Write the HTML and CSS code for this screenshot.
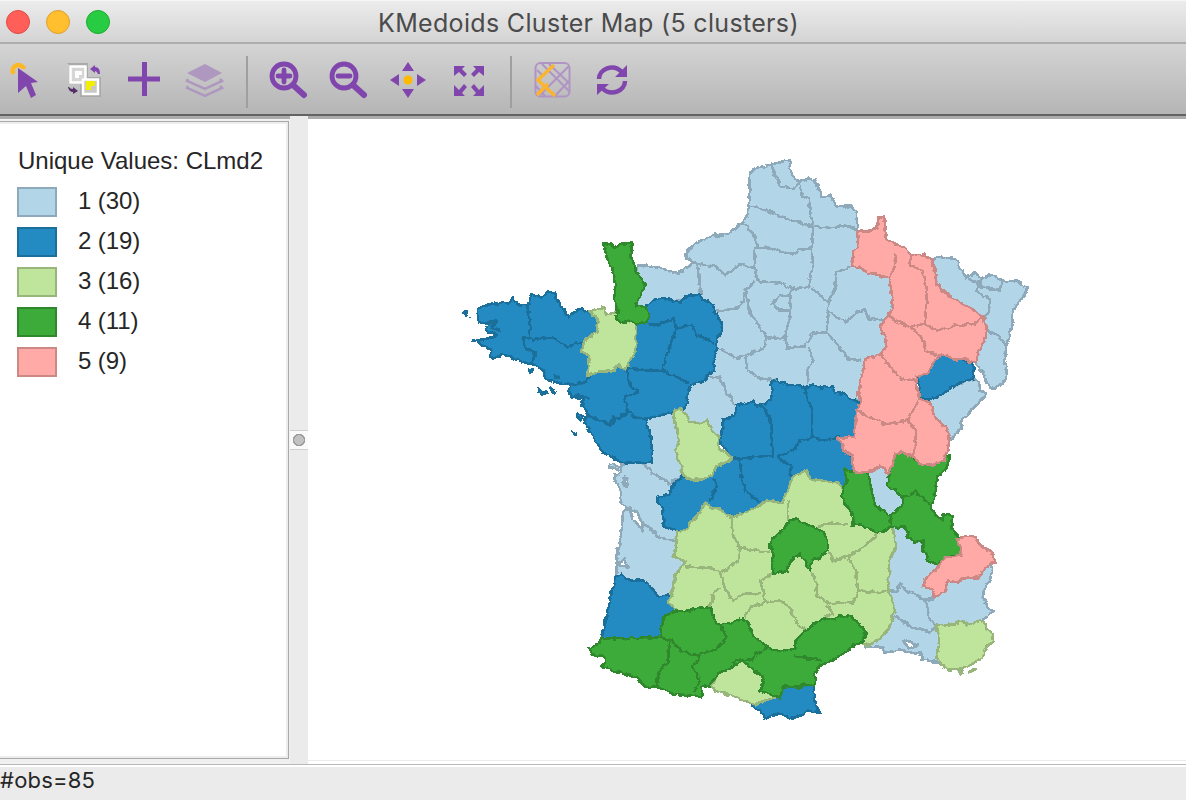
FILE: index.html
```html
<!DOCTYPE html>
<html lang="en">
<head>
<meta charset="utf-8">
<title>KMedoids Cluster Map</title>
<link rel="stylesheet" href="styles.css">
</head>
<body>
<div class="window">
  <header class="titlebar">
    <div class="lights"><span class="light close"></span><span class="light minimize"></span><span class="light maximize"></span></div>
    <h1 class="title">KMedoids Cluster Map (5 clusters)</h1>
  </header>
  <nav class="toolbar">
    <svg class="icon" viewBox="4 60 40 40"><path d="M13.500 74c-3-6 3-11 8-8q2 1 2.500 3" fill="none" stroke="#fdb924" stroke-width="4.500"/><path class="solid" d="M18 68l20 14-7 1 5 12-5 3-5-12-8 7z"/></svg>
    <svg class="icon" viewBox="64 60 40 40"><path d="M67 63h21v14h13v20H80V84H69V65z" fill="#aaa"/><rect x="70.500" y="66.500" width="15" height="16" fill="#d6d6d6" stroke="#fff" stroke-width="2.500"/><path d="M75 71h7v4h-3v3h-4z" fill="#fff"/><rect x="83" y="79.500" width="15" height="14.500" fill="#c9c9c9" stroke="#fff" stroke-width="2.500"/><path d="M86 81h9v5h-4v4h-5z" fill="#f4ee00"/><path class="solid" d="M90 69l5-4v2q5 0 5 7h-2q-1-3-3-3v2z"/><path d="M78 91l-5-4v2q-3 0-4-2h-1q1 5 5 5v2z" fill="#553068"/></svg>
    <svg class="icon" viewBox="124 60 40 40"><path d="M144.500 62v34M128 79h32" stroke="#8146ad" stroke-width="5" fill="none"/></svg>
    <svg class="icon" viewBox="184 60 40 40"><path d="M187 73l18-9 17 9-17 9z" fill="#af98bf"/><path d="M188 79l-1 2 18 8 17-8-2-2M188 86l-1 2 18 8 17-8-2-2" fill="none" stroke="#af98bf" stroke-width="2.500"/></svg>
    <span class="divider"></span>
    <svg class="icon" viewBox="268 60 40 40"><g class="line"><circle cx="284" cy="76" r="12"/><path d="M284 70v12M278 76h12"/><path d="M293 85l11 10" stroke-width="6"/></g></svg>
    <svg class="icon" viewBox="328 60 40 40"><g class="line"><circle cx="344" cy="76" r="12"/><path d="M338 76h12"/><path d="M353 85l11 10" stroke-width="6"/></g></svg>
    <svg class="icon" viewBox="388 60 40 40"><circle cx="408" cy="80" r="4.500" fill="#fdb900"/><path class="solid" d="M408 62l6 9h-12zM408 98l6-9h-12zM390 80l9-6v12zM426 80l-9-6v12z"/></svg>
    <svg class="icon" viewBox="448 60 40 40"><path class="solid" d="M454 66h11l-3 3 5 5-3 3-5-5-5 4zM484 66h-11l3 3-5 5 3 3 5-5 5 4zM454 96h11l-3-3 5-6-3-3-5 6-5-5zM484 96h-11l3-3-5-6 3-3 5 6 5-5z"/></svg>
    <span class="divider"></span>
    <svg class="icon" viewBox="532 60 40 40"><g fill="none"><rect x="535.500" y="63" width="34" height="33.500" rx="5" stroke="#af94c4" stroke-width="2"/><path d="M542 64l28 28M569 66l-29 29M569 81l-14 15M549 64l20 19M536 86l9 10M537 70l5 5" stroke="#af94c4" stroke-width="2"/><path d="M554 65l-16 15 17 16M548 84l-11 11" stroke="#fbb42f" stroke-width="3.500"/></g></svg>
    <svg class="icon" viewBox="592 60 40 40"><path d="M599 79c0-10 14-16 23-7M625 81c0 10-14 16-23 7" fill="none" stroke="#8146ad" stroke-width="4.500"/><path class="solid" d="M627 65v12h-12zM597 95V84h12z"/></svg>
  </nav>
  <main class="body">
    <aside class="sidebar">
      <div class="legend">
        <h2 class="legend-title">Unique Values: CLmd2</h2>
        <ul class="legend-list">
          <li><i class="swatch c1"></i><span>1 (30)</span></li>
          <li><i class="swatch c2"></i><span>2 (19)</span></li>
          <li><i class="swatch c3"></i><span>3 (16)</span></li>
          <li><i class="swatch c4"></i><span>4 (11)</span></li>
          <li><i class="swatch c5"></i><span>5 (9)</span></li>
        </ul>
      </div>
    </aside>
    <div class="splitter"><span class="knob"></span></div>
    <section class="canvas">
      <svg class="map" viewBox="308 119 878 640">
        <defs>
          <filter id="coast" filterUnits="userSpaceOnUse" x="308" y="119" width="878" height="640" color-interpolation-filters="sRGB">
            <feTurbulence type="fractalNoise" baseFrequency="0.17" numOctaves="2" seed="4" result="n"/>
            <feDisplacementMap in="SourceGraphic" in2="n" scale="5" xChannelSelector="R" yChannelSelector="G"/>
          </filter>
        </defs>
        <g filter="url(#coast)">
          <g class="r1">
            <path d="M638 265L645 265 662 268 674 272 683 270 694 262 686 257 688 249 697 242 710 236 728 233 742 223 748 213 749 203 750 172 758 167 771 164 782 161 790 160 792 175 800 182 808 178 815 180 820 192 820 196 830 195 835 202 836 206 852 206 857 212 857 229 870 260 895 280 890 320 885 350 862 380 862 400 780 400 720 440 700 470 672 480 690 500 690 560 675 600 640 600 616 578 617 556 621 535 623 512 627 508 620 500 620 488 616 482 614 474 619 474 621 470 608 467 610 463 620 467 624 463 640 460 636 440 636 410 690 385 700 380 715 330 700 300 655 300 640 310 630 290Z"/>
            <path d="M932 259L942 256 956 259 966 277 975 272 980 278 993 274 1003 281 1016 280 1024 286 1028 287 1022 298 1013 309 1012 327 1007 342 1005 358 1007 375 1002 384 994 388 987 383 982 370 975 362 975 340 930 300Z"/>
            <path d="M975 378L979 381 980 390 986 393 983 398 972 409 962 419 961 428 951 439 940 435 920 405 935 392Z"/>
            <path d="M865 465H898L910 495 890 520 865 510Z"/>
            <path d="M893 522L905 522 925 535 940 558 990 563 992 569 990 580 984 589 983 596 987 606 993 611 984 619 980 640 940 662 922 659 921 653 910 652 900 650 884 652 884 647 865 646 875 620 885 560Z"/>
            <g class="sea"><path d="M629 508L637 512 642 522 643 530 638 524 632 517Z"/><path d="M619 562L624 559 628 566 620 566Z"/><path d="M625 476L627 480 626 486 623 482Z"/><path d="M903 640L910 641 917 645 909 648Z"/></g>
            <path class="edge" d="M771 164L775 175 781 186 794 188 800 182M800 186L802 195 809 198 810 210 813 226 830 227 845 225 856 229M749 206L762 208 780 216 795 221 813 226M744 223L755 236 757 247 770 248 792 254 800 249 812 248 813 226M755 247L754 264 757 278 760 281 780 282 790 288 808 287 810 278 813 265 812 248M695 263L716 266 725 275 740 264 756 268M697 264L700 285 701 294M755 281L745 290 744 300 738 307 717 311M746 290L749 310 757 322 766 337 764 348 745 355 737 358 720 348M766 337L785 337 790 315 791 285M790 295L780 295 772 303 779 310 791 310M785 337L787 347 805 346 812 333 827 332 828 302 812 287M828 302L835 290 836 272 855 265M828 311L845 322 858 311 865 309 868 318 884 320M827 332L838 344 848 358 861 360M745 355L748 370 760 378 777 380M808 347L813 358 808 370 807 384M705 376L720 377 727 392 735 405M643 463L652 472 665 480 672 485M643 524L650 527 658 537 678 540M966 277L980 283 976 291 989 298 990 310 984 318M980 278L982 287 1000 289 1003 281M988 330L998 335 1005 345M890 590L897 592 900 583 906 590 912 592 926 600 930 620 938 627M895 615L912 627 930 631 938 625M926 600L935 597"/>
          </g>
          <g class="r2">
            <path d="M478 309L483 306 496 303 508 302 513 298 518 304 530 303 531 294 541 297 547 292 555 292 557 298 562 307 568 317 581 308 590 312 605 320 630 320 640 310 647 305 655 299 665 298 680 302 685 296 700 294 703 299 713 304 715 312 722 322 722 331 716 337 717 347 714 360 715 370 707 375 705 380 695 383 689 387 688 392 687 402 682 410 672 412 660 415 645 418 650 432 652 450 652 462 625 462 616 459 603 452 597 443 588 428 584 422 588 413 582 405 583 398 572 396 568 390 571 384 560 383 545 378 544 370 535 365 525 362 514 358 506 355 501 354 498 357 492 358 490 348 482 345 478 340 487 338 497 335 488 332 485 328 492 322 478 322Z"/>
            <path d="M719 440L723 430 723 419 735 415 737 405 745 403 752 401 757 405 767 403 771 398 773 390 771 382 778 380 788 385 798 384 805 388 812 384 822 387 832 386 835 392 845 394 850 398 860 402 860 425 858 440 845 450 856 460 852 480 845 490 820 490 800 500 765 506 752 513 735 517 720 513 710 507 700 525 680 532 664 525 662 507 657 500 659 496 670 493 672 485 682 476 700 478 712 465 730 455Z"/>
            <path d="M615 576L622 574 630 580 643 580 650 585 657 596 668 595 676 604 680 615 665 645 610 645 602 637 606 618 610 600Z"/>
            <path d="M916 376L927 368 930 360 942 354 955 357 965 360 973 363 974 378 960 382 950 388 940 395 928 399 918 395 920 385Z"/>
            <path d="M752 702L765 700 780 686 795 682 815 682 815 705 820 712 808 711 798 716 790 719 783 714 778 713 765 718 760 710 752 706Z"/>
            <path d="M463 312L468 312 466 314ZM469 316l2 2M472 340h4M528 369L532 370 530 372ZM538 388L543 392 547 392 543 394 538 392ZM550 388l4 2 2 3-3-1ZM572 431l5 3-4 0ZM578 413l5 3-2 3-4-3Z"/>
            <path class="edge" d="M527 303L529 315 530 330 530 337M523 337L535 339 553 337 568 347 575 342 582 343M523 337L525 347 535 352 532 365M572 384L585 382 590 375M570 394L590 397M585 410L590 416 600 420 610 425 613 417 620 418 628 410M626 369L630 385 638 392 624 397 628 410 634 417 645 418M628 368L645 370 662 370M649 324L660 324 674 318 676 330 668 350 662 370 680 378 690 383M676 328L692 325 698 335 714 343M760 405L770 415 772 440 773 455 740 458 730 458M777 457L793 450 800 440 812 437 812 410 805 390M812 437L825 440 840 436M778 457L790 465 792 478M740 458L741 475 745 490 760 502M714 478L717 485 709 502"/>
            <path class="edge thick" d="M485 323L495 321 492 327 500 330M612 422l3-5M554 376h6"/>
          </g>
          <g class="r3">
            <path d="M589 311L597 308 604 307 606 314 617 312 625 320 636 322 636 350 630 360 626 369 618 365 612 371 600 371 588 375 588 365 589 355 582 351 584 341 592 334 597 331 598 322 596 316Z"/>
            <path d="M673 411L680 408 686 413 690 421 700 423 707 420 712 430 719 436 719 448 732 457 726 462 716 466 713 474 702 479 688 479 682 472 681 463 677 458 676 450 679 440 677 430 675 420Z"/>
            <path d="M677 532L686 530 690 522 700 512 705 502 712 508 721 508 725 514 732 517 745 512 760 505 768 500 783 503 784 496 790 487 791 477 800 473 807 469 809 478 822 480 838 482 843 488 855 510 865 524 880 528 891 526 895 535 895 548 890 560 888 590 895 610 892 618 888 630 880 638 867 646 855 635 820 640 800 660 770 655 750 640 720 630 705 620 680 615 676 610 668 600 672 592 674 585 675 575 680 568 686 562 674 556 676 548Z"/>
            <path d="M712 685L720 668 735 660 760 665 770 685 775 697 765 700 757 704 742 700 728 694 714 690Z"/>
            <path d="M937 624L945 625 955 623 962 621 968 624 980 620 985 622 987 629 993 633 994 640 986 647 982 657 970 665 963 668 948 669 941 664 936 657 939 645 938 635 936 628ZM958 670l4 1-1 2ZM970 671l5-2-2 2Z"/>
            <path class="edge" d="M732 517L732 533 740 547 738 560 728 568 720 572 712 567 700 567 686 566M740 547L755 550 770 551M774 573L760 580 763 592 765 600M720 573L725 588 733 600 745 593 760 593M720 588L713 592 712 600 707 612M745 617L750 607 765 602 780 600 790 607 798 625 808 630M788 500L788 519M817 528L826 523 848 524M828 550L833 560 848 556 865 545 878 533M848 556L856 570 858 590 853 602 830 603 817 595 816 580 811 572M858 590L870 592 886 591M827 605L832 612 825 618"/>
          </g>
          <g class="r4">
            <path d="M603 242L610 244 615 247 623 243 632 243 631 256 634 264 636 272 641 278 646 284 643 290 638 300 636 305 647 307 650 315 648 321 636 323 628 320 620 323 616 317 618 311 614 300 615 285 614 272 610 265 606 254Z"/>
            <path d="M894 453L908 451 915 460 935 463 940 460 946 456 950 455 948 463 945 470 937 476 936 490 933 500 931 507 936 514 942 519 944 514 953 516 952 528 958 536 966 548 965 555 950 555 937 564 927 559 923 548 924 541 914 541 908 536 905 527 897 527 890 526 890 516 897 510 903 503 901 496 895 490 888 486 888 478 890 472 892 462Z"/>
            <path d="M844 468L850 471 868 471 870 481 872 492 875 505 885 511 890 515 891 525 885 531 876 532 868 527 860 524 852 525 854 515 845 503 842 497 843 487 847 482Z"/>
            <path d="M770 545L773 538 780 532 785 526 790 519 796 519 806 523 818 529 824 532 827 541 828 550 818 558 812 560 810 570 805 562 800 553 797 556 791 560 787 570 774 573 772 562 774 555Z"/>
            <path d="M588 648L598 644 602 638 625 638 645 637 659 637 661 627 665 615 676 611 690 610 700 607 711 608 713 616 717 624 730 623 743 618 750 624 753 635 763 643 770 648 785 650 795 648 795 640 804 632 813 624 824 618 835 619 842 615 852 617 862 626 866 632 864 640 855 644 842 655 832 660 820 665 815 674 815 685 805 684 800 687 783 686 780 697 770 694 760 690 764 683 762 675 756 671 748 664 742 661 730 668 720 672 712 680 710 685 702 687 702 696 688 695 672 693 658 687 645 686 636 677 623 673 610 669 602 667 606 660 603 655 592 654Z"/>
            <path class="edge" d="M661 637L672 640 680 650 697 655 710 650 717 648 727 638 722 628 717 623M670 640L668 660 658 673 657 686M700 655L693 666 700 680 694 692M734 663L737 659 752 660 754 655 766 647M793 655L805 657 822 660M901 496L908 496 915 491 925 500 932 505M668 645v12M670 640v8"/>
          </g>
          <g class="r5">
            <path d="M857 231L868 231 877 227 878 218 884 216 885 225 887 239 895 243 904 247 911 255 925 254 932 259 935 270 936 283 945 292 960 302 975 310 983 317 987 330 985 340 979 350 977 361 972 362 965 358 955 359 942 354 933 362 928 372 916 376 917 385 919 398 930 402 934 415 943 424 950 433 948 448 944 460 935 464 920 464 914 456 902 452 895 453 893 465 888 472 880 466 872 471 855 472 852 462 853 455 843 450 842 443 838 438 855 436 856 410 862 402 858 395 863 367 866 357 880 355 887 345 884 335 880 327 888 315 893 305 890 278 880 275 868 272 860 267 852 266 853 252 858 246Z"/>
            <path d="M956 540L965 536 973 536 983 547 993 552 995 561 985 568 978 577 962 578 958 582 948 580 945 590 935 597 932 589 923 586 926 577 935 570 945 557 960 554 962 548Z"/>
            <path class="edge" d="M911 255L910 265 923 270 927 290 925 323 912 327 895 320 888 312M896 252L895 265 890 278M925 323L937 330 955 325 975 323 983 316M912 328L923 338 925 350 942 356M880 353L893 370 902 378 916 380M858 410L872 418 885 424 908 420 918 400M908 420L916 430 915 445 913 455"/>
          </g>
        </g>
      </svg>
    </section>
  </main>
  <footer class="statusbar">#obs=85</footer>
</div>
</body>
</html>
```
FILE: styles.css
```css
* { box-sizing: border-box; }
body { margin: 0; background: #ebebeb; }
.window { width: 1186px; height: 800px; display: flex; flex-direction: column; overflow: hidden; background: #ebebeb; color: #262626; }
.titlebar { flex: none; height: 44px; display: grid; grid-template-columns: 378px auto 1fr; align-items: center; background: linear-gradient(#ececec, #d4d4d4); border-top: 1px solid #f6f6f6; border-bottom: 2px solid #adadad; }
.lights { display: flex; gap: 16px; padding: 1px 0 0 6px; }
.light { width: 24px; height: 24px; border-radius: 50%; border: 1px solid; }
.close { background: #ff5f58; border-color: #de4c45; }
.minimize { background: #ffbf2f; border-color: #df9f2c; }
.maximize { background: #28cc42; border-color: #1dab30; }
.title { margin: 2px 0 0; font: 400 25px/32px Inter, sans-serif; letter-spacing: .33px; color: #4b4b4b; white-space: nowrap; }
.toolbar { flex: none; height: 72px; display: flex; align-items: center; gap: 20px; padding: 2px 0 0 4px; background: linear-gradient(#d4d4d4, #b5b5b5); border-bottom: 2px solid #626262; }
.icon { flex: none; width: 40px; height: 40px; }
.solid { fill: #8146ad; }
.line { fill: none; stroke: #8146ad; stroke-width: 4.8; stroke-linecap: round; }
.divider { flex: none; width: 2px; height: 52px; margin: 3px 0 0 2px; background: #9f9f9f; }
.body { flex: none; height: 648px; display: flex; }
.sidebar { width: 290px; border-top: 3px solid #ababab; padding: 2px 1px 5px 0; background: #f0f0f0; }
.legend { height: 100%; border: solid #a9a9a9; border-width: 1px 1px 1px 0; background: #fff; box-shadow: inset -2px 2px #ededed, inset 0 -2px #ededed; padding: 24px 0 0 17px; font: 400 24px/38px "Liberation Sans", sans-serif; letter-spacing: -.1px; }
.legend-title { margin: 0 0 0 1px; font: inherit; letter-spacing: 0; line-height: 30px; white-space: nowrap; }
.legend-list { list-style: none; margin: 6px 0 0; padding: 0; }
.legend-list li { height: 40px; display: flex; align-items: center; gap: 21px; }
.legend-list span { padding-bottom: 2px; }
.swatch { width: 40px; height: 30px; border: 2px solid; }
.c1 { background: #b2d5e8; border-color: #8eaaba; }
.c2 { background: #238bc2; border-color: #1b6f9b; }
.c3 { background: #bfe49b; border-color: #98b67c; }
.c4 { background: #3dab39; border-color: #30882d; }
.c5 { background: #ffaaa7; border-color: #cc8885; }
.splitter { width: 18px; background: #ebebeb; display: flex; align-items: center; }
.knob { width: 18px; height: 20px; background: radial-gradient(circle, #c2c2c2 0 4.5px, #9c9c9c 5px 6px, transparent 6.5px) #fafafa; border: solid #d0d0d0; border-width: 1px 0; }
.canvas { width: 878px; border-top: 3px solid #ababab; background: #fff; }
.map { display: block; width: 878px; height: 642px; border-bottom: 1px solid #ebebeb; }
.map path { stroke-width: 2.5; stroke-linejoin: round; shape-rendering: crispEdges; }
.map .edge { fill: none; }
.map .thick { stroke-width: 4; }
.map .sea path { fill: #fff; }
.r1 { fill: #b2d5e8; stroke: #8eaaba; }
.r2 { fill: #238bc2; stroke: #1b6f9b; }
.r3 { fill: #bfe49b; stroke: #98b67c; }
.r4 { fill: #3dab39; stroke: #30882d; }
.r5 { fill: #ffaaa7; stroke: #cc8885; }
.statusbar { flex: none; height: 36px; border-top: 1px solid #b8b8b8; box-shadow: inset 0 2px #fff; padding-top: 2px; font: 400 22px/27px Inter, sans-serif; letter-spacing: .2px; }
```
